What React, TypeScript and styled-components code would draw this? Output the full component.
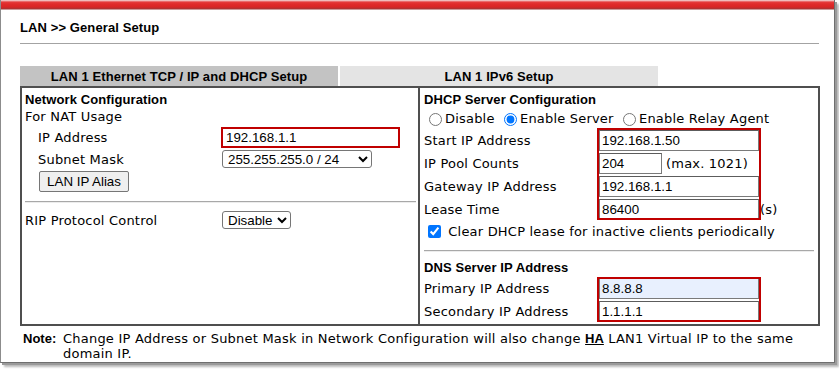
import React from "react";
import styled, { createGlobalStyle } from "styled-components";

const GlobalStyle = createGlobalStyle`
  html, body { margin: 0; padding: 0; background: #ffffff; }
  body { font-family: "DejaVu Sans", Verdana, sans-serif; color: #000; }
  *, *::before, *::after { box-sizing: border-box; }
`;

const ARIAL = `"Liberation Sans", Arial, sans-serif`;
const VERDANA = `"DejaVu Sans", Verdana, sans-serif`;
const BORDER = "#4f4f4f";
const FLAG = "#c00000";
const TRACK = "0.2px";

const Viewport = styled.div`
  width: 839px;
  height: 369px;
  overflow: hidden;
  background: #ffffff;
`;

const Window = styled.div`
  width: 835px;
  height: 363px;
  display: flex;
  flex-direction: column;
  background: #ffffff;
  border-left: 1px solid #8c8c8c;
  border-right: 1px solid #6f6f6f;
  border-bottom: 1px solid #6f6f6f;
  box-shadow: 2px 2px 0 0 #9a9a9a, 4px 4px 2px 0 rgba(0, 0, 0, 0.28);
`;

const TitleBar = styled.div`
  flex: none;
  height: 10px;
  background: linear-gradient(
    to bottom,
    #f1dada 0px,
    #ee9a9a 1px,
    #e43c3c 2px,
    #e02b2b 4px,
    #d82424 7px,
    #b23030 8.5px,
    #d6cccc 10px
  );
`;

const Content = styled.main`
  padding: 10px 0 0 19px;
`;

const PageTitle = styled.h1`
  margin: 0;
  font: bold 13px/15px ${ARIAL};
  letter-spacing: 0.1px;
  color: #000;
`;

const TitleRule = styled.hr`
  margin: 8px 0 0;
  width: 799px;
  height: 0;
  border: 0;
  border-top: 1px solid #a3a3a3;
`;

const TabStrip = styled.nav`
  display: flex;
  gap: 2px;
  margin-top: 22px;
  height: 20px;
`;

const Tab = styled.div<{ $active?: boolean }>`
  width: 318px;
  padding-top: 2px;
  text-align: center;
  font: bold 13px/17px ${ARIAL};
  letter-spacing: 0.1px;
  color: #000;
  background: ${(p) => (p.$active ? "#c3c3c3" : "#e4e4e4")};
`;

const Panel = styled.div`
  display: grid;
  grid-template-columns: 398px 398px;
  width: 800px;
  border: 2px solid ${BORDER};
`;

const LeftCell = styled.section`
  border-right: 2px solid ${BORDER};
  padding: 4px 2px 0 3px;
`;

const RightCell = styled.section`
  display: flex;
  flex-direction: column;
  padding: 4px 4px 1px 4px;
`;

const SectionHeading = styled.h2`
  margin: 0;
  font: bold 13px/16px ${ARIAL};
  letter-spacing: 0.1px;
  color: #000;
`;

const TextLine = styled.div`
  height: 18px;
  font: 13px/18px ${VERDANA};
  letter-spacing: ${TRACK};
`;

const FieldRow = styled.div<{ $h: number }>`
  display: grid;
  grid-template-columns: 197px auto;
  justify-content: start;
  align-items: center;
  height: ${(p) => p.$h}px;
`;

const FieldLabel = styled.span<{ $indent?: number }>`
  font: 13px/15px ${VERDANA};
  letter-spacing: ${TRACK};
  padding-left: ${(p) => p.$indent ?? 0}px;
  white-space: nowrap;
`;

const TextInput = styled.input<{ $w: number; $flag?: boolean; $fill?: string }>`
  display: block;
  width: ${(p) => p.$w}px;
  height: 21px;
  margin: 0 0 0 ${(p) => (p.$flag ? -1 : 0)}px;
  padding: 0 ${(p) => (p.$flag ? 3 : 2)}px;
  border: ${(p) => (p.$flag ? `2px solid ${FLAG}` : "1px solid #7a7a7a")};
  border-top-color: ${(p) => (p.$flag ? FLAG : "#5c5c5c")};
  background: ${(p) => p.$fill ?? "#ffffff"};
  font: 13.333px ${ARIAL};
  color: #000;
  outline: none;
`;

const Select = styled.select<{ $w: number }>`
  width: ${(p) => p.$w}px;
  height: 18px;
  margin: 0;
  padding: 0 0 0 1px;
  font: 13.333px ${ARIAL};
  color: #000;
  background-color: #ffffff;
  border: 1px solid #767676;
  border-radius: 3px;
`;

const ButtonRow = styled.div`
  height: 21px;
  margin-top: 2px;
  padding-left: 14px;
`;

const Button = styled.button`
  width: 90px;
  height: 21px;
  margin: 0;
  padding: 0;
  font: 13.333px ${ARIAL};
  color: #000;
  background: #efefef;
  border: 1px solid #767676;
  border-radius: 2px;
`;

const Divider = styled.hr<{ $mt: number; $mb: number }>`
  margin: ${(p) => p.$mt}px 0 ${(p) => p.$mb}px;
  height: 0;
  border: 0;
  border-top: 1px solid #a8a8a8;
  border-bottom: 1px solid #ececec;
`;

const RadioLine = styled.div`
  height: 21px;
  font: 13px/21px ${VERDANA};
  letter-spacing: ${TRACK};
  white-space: nowrap;
`;

const Radio = styled.input.attrs({ type: "radio" })`
  width: 13px;
  height: 13px;
  margin: 0 3px 0 5px;
  vertical-align: -3px;
`;

const FormGrid = styled.div<{ $rows: number; $mt?: number }>`
  display: grid;
  grid-template-columns: 175px 160px 1fr;
  grid-template-rows: repeat(${(p) => p.$rows}, 23px);
  align-items: center;
  margin-top: ${(p) => p.$mt ?? 0}px;
`;

const GridLabel = styled(FieldLabel)<{ $row: number }>`
  grid-column: 1;
  grid-row: ${(p) => p.$row};
`;

const GridField = styled.div<{ $row: number }>`
  grid-column: 2;
  grid-row: ${(p) => p.$row};
  display: flex;
  align-items: center;
  gap: 4px;
`;

const GridSuffix = styled.span<{ $row: number }>`
  grid-column: 3;
  grid-row: ${(p) => p.$row};
  font: 13px/15px ${VERDANA};
  letter-spacing: ${TRACK};
  padding-left: 1px;
`;

const Hint = styled.span`
  font: 13px/15px ${VERDANA};
  letter-spacing: ${TRACK};
  white-space: nowrap;
`;

const Highlight = styled.div<{ $rows: number; $top: number }>`
  grid-column: 2;
  grid-row: 1 / span ${(p) => p.$rows};
  align-self: stretch;
  margin: ${(p) => p.$top}px -2px 1px -2px;
  border: 2px solid ${FLAG};
  pointer-events: none;
  z-index: 1;
`;

const CheckLine = styled.label`
  display: block;
  height: 22px;
  font: 13px/22px ${VERDANA};
  letter-spacing: ${TRACK};
  white-space: nowrap;
`;

const CheckBox = styled.input.attrs({ type: "checkbox" })`
  width: 13px;
  height: 13px;
  margin: 0 3px 0 4px;
  vertical-align: -2px;
`;

const NoteRow = styled.div`
  display: flex;
  width: 797px;
  margin: 5px 0 0 3px;
`;

const NoteTag = styled.strong`
  flex: 0 0 40px;
  font: bold 13px/15px ${ARIAL};
`;

const NoteText = styled.p`
  flex: 1;
  margin: 0;
  font: 13px/15px ${VERDANA};
  letter-spacing: 0.22px;
`;

const NoteLink = styled.span`
  font: bold 13px ${ARIAL};
  letter-spacing: 0;
  text-decoration: underline;
`;

export default function App() {
  return (
    <Viewport>
      <GlobalStyle />
      <Window>
        <TitleBar />
        <Content>
          <PageTitle>LAN &gt;&gt; General Setup</PageTitle>
          <TitleRule />
          <TabStrip>
            <Tab $active>LAN 1 Ethernet TCP / IP and DHCP Setup</Tab>
            <Tab>LAN 1 IPv6 Setup</Tab>
          </TabStrip>
          <Panel>
            <LeftCell>
              <SectionHeading>Network Configuration</SectionHeading>
              <TextLine>For NAT Usage</TextLine>
              <FieldRow $h={23}>
                <FieldLabel $indent={13}>IP Address</FieldLabel>
                <TextInput $w={179} $flag defaultValue="192.168.1.1" />
              </FieldRow>
              <FieldRow $h={20}>
                <FieldLabel $indent={13}>Subnet Mask</FieldLabel>
                <Select $w={150} defaultValue="24">
                  <option value="24">255.255.255.0 / 24</option>
                </Select>
              </FieldRow>
              <ButtonRow>
                <Button type="button">LAN IP Alias</Button>
              </ButtonRow>
              <Divider $mt={9} $mb={7} />
              <FieldRow $h={20}>
                <FieldLabel>RIP Protocol Control</FieldLabel>
                <Select $w={69} defaultValue="off">
                  <option value="off">Disable</option>
                </Select>
              </FieldRow>
            </LeftCell>
            <RightCell>
              <SectionHeading>DHCP Server Configuration</SectionHeading>
              <RadioLine>
                <Radio name="dhcp" />Disable <Radio name="dhcp" defaultChecked />Enable Server{" "}
                <Radio name="dhcp" />Enable Relay Agent
              </RadioLine>
              <FormGrid $rows={4}>
                <GridLabel $row={1}>Start IP Address</GridLabel>
                <GridField $row={1}>
                  <TextInput $w={160} defaultValue="192.168.1.50" />
                </GridField>
                <GridLabel $row={2}>IP Pool Counts</GridLabel>
                <GridField $row={2}>
                  <TextInput $w={63} defaultValue="204" />
                  <Hint>(max. 1021)</Hint>
                </GridField>
                <GridLabel $row={3}>Gateway IP Address</GridLabel>
                <GridField $row={3}>
                  <TextInput $w={160} defaultValue="192.168.1.1" />
                </GridField>
                <GridLabel $row={4}>Lease Time</GridLabel>
                <GridField $row={4}>
                  <TextInput $w={160} defaultValue="86400" />
                </GridField>
                <GridSuffix $row={4}>(s)</GridSuffix>
                <Highlight $rows={4} $top={-1} />
              </FormGrid>
              <CheckLine>
                <CheckBox defaultChecked /> Clear DHCP lease for inactive clients periodically
              </CheckLine>
              <Divider $mt={7} $mb={8} />
              <SectionHeading>DNS Server IP Address</SectionHeading>
              <FormGrid $rows={2} $mt={1}>
                <GridLabel $row={1}>Primary IP Address</GridLabel>
                <GridField $row={1}>
                  <TextInput $w={160} $fill="#e8f0fe" defaultValue="8.8.8.8" />
                </GridField>
                <GridLabel $row={2}>Secondary IP Address</GridLabel>
                <GridField $row={2}>
                  <TextInput $w={160} defaultValue="1.1.1.1" />
                </GridField>
                <Highlight $rows={2} $top={0} />
              </FormGrid>
            </RightCell>
          </Panel>
          <NoteRow>
            <NoteTag>Note:</NoteTag>
            <NoteText>
              Change IP Address or Subnet Mask in Network Configuration will also change{" "}
              <NoteLink>HA</NoteLink> LAN1 Virtual IP to the same domain IP.
            </NoteText>
          </NoteRow>
        </Content>
      </Window>
    </Viewport>
  );
}
